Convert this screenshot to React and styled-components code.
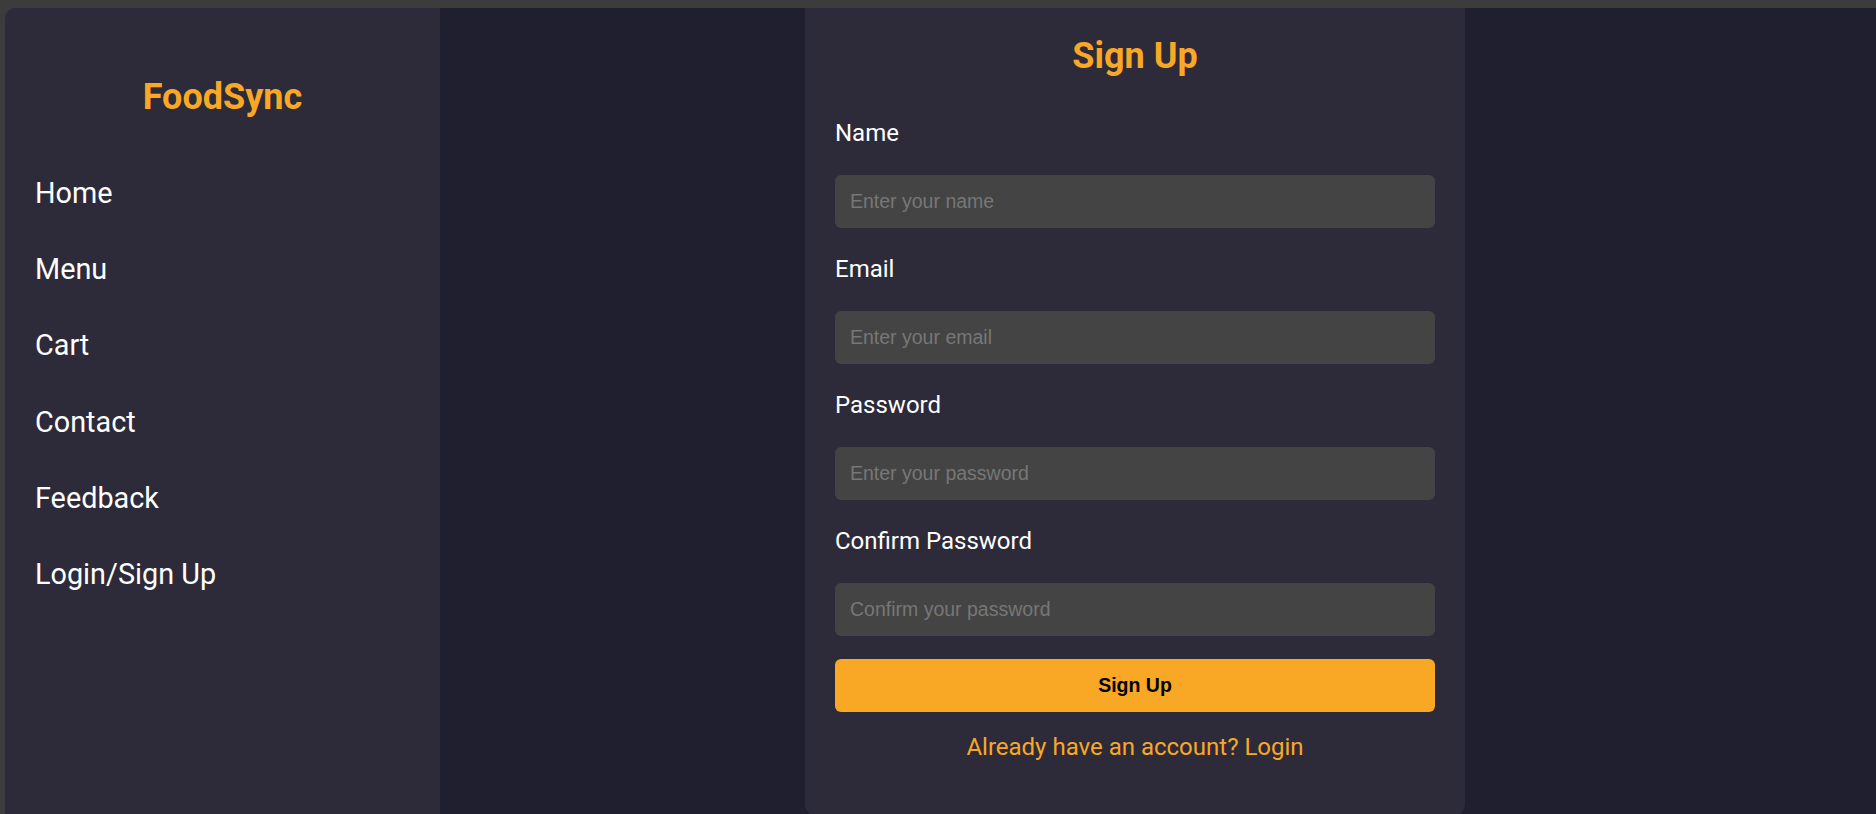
import React, { useState } from 'react';
import styled, { createGlobalStyle } from 'styled-components';

const GlobalStyle = createGlobalStyle`
  * {
    box-sizing: border-box;
  }

  body {
    margin: 0;
    background-color: #3c3c3c;
    font-family: Roboto, "Liberation Sans", Arial, sans-serif;
  }
`;

const navItems = ['Home', 'Menu', 'Cart', 'Contact', 'Feedback', 'Login/Sign Up'];

const fields = [
  { id: 'name', label: 'Name', type: 'text', placeholder: 'Enter your name' },
  { id: 'email', label: 'Email', type: 'email', placeholder: 'Enter your email' },
  { id: 'password', label: 'Password', type: 'password', placeholder: 'Enter your password' },
  { id: 'confirm', label: 'Confirm Password', type: 'password', placeholder: 'Confirm your password' }
];

const App = () => {
  const [ values, setValues ] = useState({});

  const handleChange = (e) => {
    setValues({ ...values, [e.target.name]: e.target.value });
  };

  return (
    <>
      <GlobalStyle />
      <Frame>
        <Layout>
          <Sidebar>
            <Logo>FoodSync</Logo>
            <Nav>
              {navItems.map((item) => (
                <NavLink key={item} href='#'>{item}</NavLink>
              ))}
            </Nav>
          </Sidebar>

          <Main>
            <Card>
              <Title>Sign Up</Title>
              <form onSubmit={(e) => e.preventDefault()}>
                {fields.map((field) => (
                  <Field key={field.id}>
                    <Label htmlFor={field.id}>{field.label}</Label>
                    <Input
                      id={field.id}
                      name={field.id}
                      type={field.type}
                      placeholder={field.placeholder}
                      value={values[field.id] || ''}
                      onChange={handleChange}
                    />
                  </Field>
                ))}
                <SubmitButton type='submit'>Sign Up</SubmitButton>
              </form>
              <SwitchLink href='#'>Already have an account? Login</SwitchLink>
            </Card>
          </Main>
        </Layout>
      </Frame>
    </>
  );
};

const Frame = styled.div`
  height: 814px;
  padding: 8px 0 0 5px;
  overflow: hidden;
`;

const Layout = styled.div`
  display: flex;
  height: 100%;
  border-top-left-radius: 10px;
  overflow: hidden;
`;

const Sidebar = styled.aside`
  width: 435px;
  flex-shrink: 0;
  background-color: #2d2b3a;
  padding: 68px 30px 0;
`;

const Logo = styled.h1`
  margin: 0;
  text-align: center;
  color: #f9a825;
  font-size: 36px;
  font-weight: 700;
  line-height: normal;
`;

const Nav = styled.nav`
  display: flex;
  flex-direction: column;
  gap: 42.2px;
  margin-top: 58px;
`;

const NavLink = styled.a`
  color: #ffffff;
  text-decoration: none;
  font-size: 28.8px;
  line-height: normal;

  &:hover {
    color: #f9a825;
  }
`;

const Main = styled.main`
  flex: 1;
  display: flex;
  justify-content: center;
  align-items: flex-start;
  background-color: #201f2f;
  padding-right: 46px;
`;

const Card = styled.section`
  width: 660px;
  background-color: #2d2b3a;
  border-radius: 0 0 12px 12px;
  padding: 27px 30px 55px;
  display: flex;
  flex-direction: column;
`;

const Title = styled.h2`
  margin: 0 0 42px;
  text-align: center;
  color: #f9a825;
  font-size: 36px;
  font-weight: 700;
  line-height: normal;
`;

const Field = styled.div`
  display: flex;
  flex-direction: column;
  margin-bottom: 27px;

  &:last-of-type {
    margin-bottom: 23px;
  }
`;

const Label = styled.label`
  color: #ffffff;
  font-size: 24px;
  line-height: 28px;
  margin-bottom: 28px;
`;

const Input = styled.input`
  height: 53px;
  padding: 0 15px;
  border: none;
  border-radius: 6px;
  background-color: #444444;
  color: #ffffff;
  font-family: "Liberation Sans", Arial, sans-serif;
  font-size: 19.5px;
  outline: none;

  &::placeholder {
    color: #777777;
  }
`;

const SubmitButton = styled.button`
  width: 100%;
  height: 53px;
  border: none;
  border-radius: 6px;
  background-color: #f9a825;
  color: #000000;
  font-family: "Liberation Sans", Arial, sans-serif;
  font-size: 19.5px;
  font-weight: 700;
  cursor: pointer;
`;

const SwitchLink = styled.a`
  margin-top: 21px;
  text-align: center;
  color: #f9a825;
  text-decoration: none;
  font-size: 24px;
  line-height: 28px;
`;

export default App;
